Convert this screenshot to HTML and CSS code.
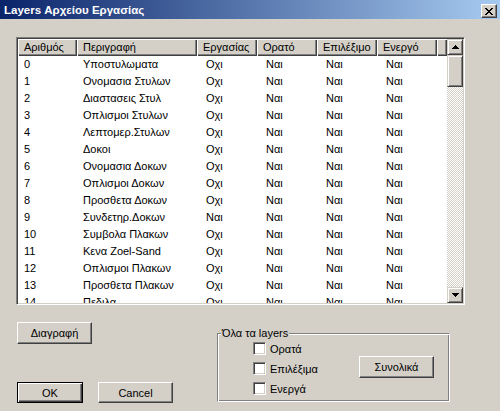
FILE: index.html
```html
<!DOCTYPE html>
<html lang="el">
<head>
<meta charset="utf-8">
<title>Layers</title>
<link rel="stylesheet" href="styles.css">
</head>
<body>
<div class="window">
  <div class="titlebar">
    <span class="title">Layers Αρχείου Εργασίας</span>
    <button class="close" type="button"><svg width="8" height="7" viewBox="0 0 8 7"><path d="M0 0h2v1h1v1h2V1h1V0h2v1H7v1H6v1H5v1h1v1h1v1h1v1H6V6H5V5H3v1H2v1H0V6h1V5h1V4h1V3H2V2H1V1H0z" fill="#000"/></svg></button>
  </div>
  <div class="client">
    <div class="listview">
      <div class="grid">
        <div class="hd">Αριθμός</div>
        <div class="hd">Περιγραφή</div>
        <div class="hd">Εργασίας</div>
        <div class="hd">Ορατό</div>
        <div class="hd">Επιλέξιμο</div>
        <div class="hd">Ενεργό</div>
        <div class="hd"></div>

        <div class="c">0</div><div class="c">Υποστυλωματα</div><div class="c v">Οχι</div><div class="c v">Ναι</div><div class="c v">Ναι</div><div class="c v">Ναι</div><div class="c"></div>
        <div class="c">1</div><div class="c">Ονομασια Στυλων</div><div class="c v">Οχι</div><div class="c v">Ναι</div><div class="c v">Ναι</div><div class="c v">Ναι</div><div class="c"></div>
        <div class="c">2</div><div class="c">Διαστασεις Στυλ</div><div class="c v">Οχι</div><div class="c v">Ναι</div><div class="c v">Ναι</div><div class="c v">Ναι</div><div class="c"></div>
        <div class="c">3</div><div class="c">Οπλισμοι Στυλων</div><div class="c v">Οχι</div><div class="c v">Ναι</div><div class="c v">Ναι</div><div class="c v">Ναι</div><div class="c"></div>
        <div class="c">4</div><div class="c">Λεπτομερ.Στυλων</div><div class="c v">Οχι</div><div class="c v">Ναι</div><div class="c v">Ναι</div><div class="c v">Ναι</div><div class="c"></div>
        <div class="c">5</div><div class="c">Δοκοι</div><div class="c v">Οχι</div><div class="c v">Ναι</div><div class="c v">Ναι</div><div class="c v">Ναι</div><div class="c"></div>
        <div class="c">6</div><div class="c">Ονομασια Δοκων</div><div class="c v">Οχι</div><div class="c v">Ναι</div><div class="c v">Ναι</div><div class="c v">Ναι</div><div class="c"></div>
        <div class="c">7</div><div class="c">Οπλισμοι Δοκων</div><div class="c v">Οχι</div><div class="c v">Ναι</div><div class="c v">Ναι</div><div class="c v">Ναι</div><div class="c"></div>
        <div class="c">8</div><div class="c">Προσθετα Δοκων</div><div class="c v">Οχι</div><div class="c v">Ναι</div><div class="c v">Ναι</div><div class="c v">Ναι</div><div class="c"></div>
        <div class="c">9</div><div class="c">Συνδετηρ.Δοκων</div><div class="c v">Ναι</div><div class="c v">Ναι</div><div class="c v">Ναι</div><div class="c v">Ναι</div><div class="c"></div>
        <div class="c">10</div><div class="c">Συμβολα Πλακων</div><div class="c v">Οχι</div><div class="c v">Ναι</div><div class="c v">Ναι</div><div class="c v">Ναι</div><div class="c"></div>
        <div class="c">11</div><div class="c">Κενα Zoel-Sand</div><div class="c v">Οχι</div><div class="c v">Ναι</div><div class="c v">Ναι</div><div class="c v">Ναι</div><div class="c"></div>
        <div class="c">12</div><div class="c">Οπλισμοι Πλακων</div><div class="c v">Οχι</div><div class="c v">Ναι</div><div class="c v">Ναι</div><div class="c v">Ναι</div><div class="c"></div>
        <div class="c">13</div><div class="c">Προσθετα Πλακων</div><div class="c v">Οχι</div><div class="c v">Ναι</div><div class="c v">Ναι</div><div class="c v">Ναι</div><div class="c"></div>
        <div class="c">14</div><div class="c">Πεδιλα</div><div class="c v">Οχι</div><div class="c v">Ναι</div><div class="c v">Ναι</div><div class="c v">Ναι</div><div class="c"></div>
      </div>
      <div class="vscroll">
        <div class="sbtn"><svg width="7" height="4" viewBox="0 0 7 4"><path d="M3 0h1v1h1v1h1v1h1v1H0V3h1V2h1V1h1z" fill="#000"/></svg></div>
        <div class="track"><div class="thumb"></div></div>
        <div class="sbtn"><svg width="7" height="4" viewBox="0 0 7 4"><path d="M0 0h7v1H6v1H5v1H4v1H3V3H2V2H1V1H0z" fill="#000"/></svg></div>
      </div>
    </div>

    <div class="bottom">
      <div class="leftcol">
        <button class="btn del" type="button">Διαγραφή</button>
        <div class="okrow">
          <button class="btn ok" type="button">OK</button>
          <button class="btn cancel" type="button">Cancel</button>
        </div>
      </div>
      <div class="group">
        <span class="legend">Όλα τα layers</span>
        <div class="checks">
          <label class="chk"><span class="box"></span>Ορατά</label>
          <label class="chk"><span class="box"></span>Επιλέξιμα</label>
          <label class="chk"><span class="box"></span>Ενεργά</label>
        </div>
        <button class="btn total" type="button">Συνολικά</button>
      </div>
    </div>
  </div>
</div>
</body>
</html>
```

FILE: styles.css
```css
html, body {
  margin: 0;
  padding: 0;
  background: #d4d0c8;
}
body {
  font-family: "Liberation Sans", Arial, sans-serif;
  font-size: 11px;
  color: #000;
}
.window {
  width: 500px;
  height: 411px;
  overflow: hidden;
  background: #d4d0c8;
}
.titlebar {
  height: 19px;
  display: flex;
  align-items: flex-start;
  justify-content: space-between;
  background: linear-gradient(to right, #0a246a, #a6caf0);
}
.title {
  color: #fff;
  font-weight: bold;
  font-size: 11.5px;
  line-height: 13px;
  padding: 4px 0 0 4px;
  white-space: nowrap;
}
.close {
  margin: 4px 3px 0 0;
  width: 16px;
  height: 14px;
  padding: 0;
  background: #d4d0c8;
  border: 1px solid;
  border-color: #fff #404040 #404040 #fff;
  box-shadow: inset -1px -1px #808080;
  display: flex;
  align-items: center;
  justify-content: center;
  box-sizing: border-box;
}
.close svg { display: block; }
.client {
  padding: 18px 0 0 16px;
}
.listview {
  box-sizing: border-box;
  width: 449px;
  height: 268px;
  border: 1px solid;
  border-color: #808080 #fff #fff #808080;
  box-shadow: inset 1px 1px #404040, inset -1px -1px #d4d0c8;
  padding: 1px;
  display: flex;
}
.grid {
  flex: 1;
  overflow: hidden;
  background: #fff;
  display: grid;
  grid-template-columns: 59px 120px 60px 60px 60px 60px 1fr;
  grid-auto-rows: 17px;
  align-content: start;
}
.hd {
  background: #d4d0c8;
  box-shadow: inset 1px 1px #fff, inset -1px -1px #404040, inset -2px -2px #808080;
  line-height: 17px;
  padding-left: 6px;
  white-space: nowrap;
  overflow: hidden;
}
.c {
  line-height: 17px;
  padding-left: 6px;
  white-space: nowrap;
  overflow: hidden;
}
.c.v { padding-left: 9px; }
.vscroll {
  width: 16px;
  display: flex;
  flex-direction: column;
}
.sbtn {
  box-sizing: border-box;
  height: 16px;
  background: #d4d0c8;
  border: 1px solid;
  border-color: #d4d0c8 #404040 #404040 #d4d0c8;
  box-shadow: inset 1px 1px #fff, inset -1px -1px #808080;
  display: flex;
  align-items: center;
  justify-content: center;
}
.sbtn svg { display: block; }
.track {
  flex: 1;
  background-color: #fff;
  background-image: conic-gradient(#d4d0c8 25%, #fff 0 50%, #d4d0c8 0 75%, #fff 0);
  background-size: 2px 2px;
}
.thumb {
  box-sizing: border-box;
  height: 32px;
  background: #d4d0c8;
  border: 1px solid;
  border-color: #d4d0c8 #404040 #404040 #d4d0c8;
  box-shadow: inset 1px 1px #fff, inset -1px -1px #808080;
}
.bottom {
  display: flex;
  margin-top: 17px;
}
.leftcol {
  display: flex;
  flex-direction: column;
  padding-left: 1px;
}
.btn {
  box-sizing: border-box;
  font-family: "Liberation Sans", Arial, sans-serif;
  font-size: 11px;
  color: #000;
  background: #d4d0c8;
  border: 1px solid;
  border-color: #fff #404040 #404040 #fff;
  box-shadow: inset -1px -1px #808080;
  padding: 0;
  width: 75px;
  height: 22px;
}
.okrow {
  display: flex;
  gap: 15px;
  margin-top: 38px;
}
.btn.ok {
  width: 66px;
  height: 21px;
  border: 1px solid #000;
  box-shadow: inset 1px 1px #fff, inset -1px -1px #404040, inset -2px -2px #808080;
}
.btn.cancel {
  height: 21px;
}
.group {
  position: relative;
  box-sizing: border-box;
  margin: 11px 0 0 44px;
  width: 233px;
  height: 69px;
  border: 1px solid;
  border-color: #808080 #fff #fff #808080;
  box-shadow: inset 1px 1px #fff, inset -1px -1px #808080;
  display: grid;
  grid-template-columns: 106px 75px;
  padding: 8px 0 0 35px;
  align-items: start;
}
.legend {
  position: absolute;
  left: 3px;
  top: -7px;
  background: #d4d0c8;
  padding: 0 1px;
  line-height: 13px;
  white-space: nowrap;
}
.checks {
  display: flex;
  flex-direction: column;
  gap: 7px;
}
.chk {
  display: flex;
  align-items: center;
  gap: 4px;
  height: 13px;
  white-space: nowrap;
}
.box {
  box-sizing: border-box;
  width: 13px;
  height: 13px;
  flex: none;
  background: #fff;
  border: 1px solid;
  border-color: #808080 #fff #fff #808080;
  box-shadow: inset 1px 1px #404040, inset -1px -1px #d4d0c8;
}
.btn.total {
  margin-top: 14px;
}
```
